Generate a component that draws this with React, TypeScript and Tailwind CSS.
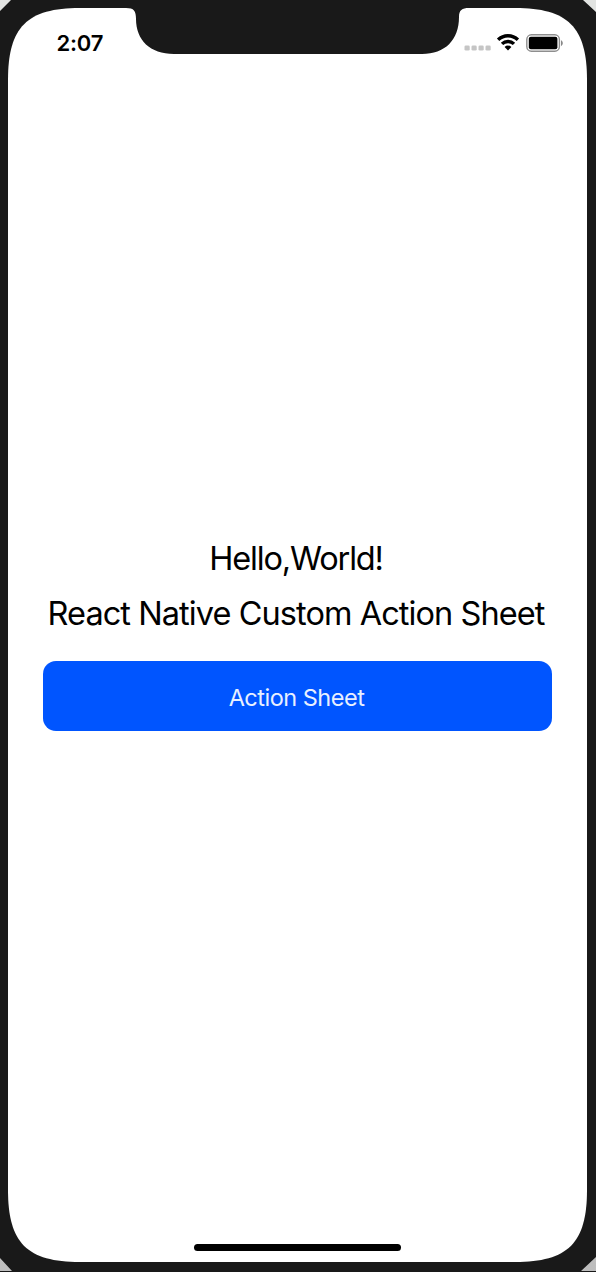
import React from "react";

function Notch() {
  return (
    <svg className="absolute left-0 top-0" width="579" height="48" viewBox="0 0 579 48" aria-hidden="true">
      <path
        d="M118 0 H461 C454 0 451 2 451 9 C451 32 437 46 414 46 H166 C142 46 128 32 128 11 C128 3 126 0 118 0 Z"
        fill="#191919"
      />
    </svg>
  );
}

function SignalDots() {
  return (
    <svg width="28" height="8" viewBox="0 0 28 8" fill="#c5c5c5" aria-hidden="true">
      <rect x="0.5" y="1.5" width="5.2" height="5" rx="1.3" />
      <rect x="7.5" y="1.5" width="5.2" height="5" rx="1.3" />
      <rect x="14.5" y="1.5" width="5.2" height="5" rx="1.3" />
      <rect x="21.5" y="1.5" width="5.2" height="5" rx="1.3" />
    </svg>
  );
}

function Wifi() {
  return (
    <svg width="24" height="18" viewBox="0 0 24 18" aria-hidden="true">
      <g fill="none" stroke="#000" strokeWidth="3.4">
        <path d="M2.1 6.8 A14.2 14.2 0 0 1 21.9 6.8" />
        <path d="M6 10.9 A8.6 8.6 0 0 1 18 10.9" />
      </g>
      <path d="M12 17.4 L8.6 14 A4.8 4.8 0 0 1 15.4 14 Z" fill="#000" />
    </svg>
  );
}

function Battery() {
  return (
    <svg width="38" height="18" viewBox="0 0 38 18" aria-hidden="true">
      <rect x="0.8" y="0.8" width="32.6" height="16.4" rx="4.6" fill="none" stroke="#8e8e8e" strokeWidth="1.4" />
      <rect x="2.8" y="2.8" width="28.6" height="12.4" rx="2" fill="#000" />
      <path d="M35 6.2 C37.4 7.2 37.4 11 35 12 Z" fill="#888" />
    </svg>
  );
}

export default function App() {
  return (
    <div className="h-[1272px] w-[596px] overflow-hidden bg-linear-to-b from-[#e2e4e2] to-[#bdbdbd] font-['Inter','Liberation_Sans',sans-serif]">
      <div className="h-full w-full bg-[#191919] px-2 pt-2 [clip-path:polygon(11px_0,583px_0,596px_12px,596px_1257px,581px_1271px,596px_1271px,596px_1272px,0_1272px,0_1271px,12px_1271px,0_1258px,0_11px)]">
        <div className="relative flex h-[1254px] w-[579px] flex-col items-center bg-white text-black [clip-path:path('M0_72C0_19_19_0_72_0H507C560_0_579_19_579_72V1182C579_1235_560_1254_507_1254H72C19_1254_0_1235_0_1182Z')]">
          <Notch />
          <header className="flex h-[70px] w-full justify-between pl-[48.5px] pr-[23px]">
            <time className="pt-[21px] text-[22px] font-semibold leading-7 tracking-[-0.2px]">2:07</time>
            <div className="flex items-start pt-[25px]">
              <div className="mt-[11px]">
                <SignalDots />
              </div>
              <div className="ml-[4px]">
                <Wifi />
              </div>
              <div className="ml-[6px] mt-px">
                <Battery />
              </div>
            </div>
          </header>
          <main className="flex w-full flex-1 flex-col items-center px-[35px] pt-[461px]">
            <p className="mr-[3px] whitespace-nowrap text-[32.5px] leading-[40px] tracking-[-1.15px]">Hello,World!</p>
            <h1 className="mr-[3px] mt-[15px] whitespace-nowrap text-[32.5px] font-normal leading-[40px] tracking-[-0.93px]">
              React Native Custom Action Sheet
            </h1>
            <button className="mt-[27.4px] h-[70px] w-full rounded-[13px] bg-[#0055ff] pr-0.5 pt-0.5 text-[23.5px] tracking-[-0.5px] text-[#e8f0ff]">
              Action Sheet
            </button>
          </main>
          <div className="mb-[11px] h-[7px] w-[207px] rounded-full bg-black" />
        </div>
      </div>
    </div>
  );
}
